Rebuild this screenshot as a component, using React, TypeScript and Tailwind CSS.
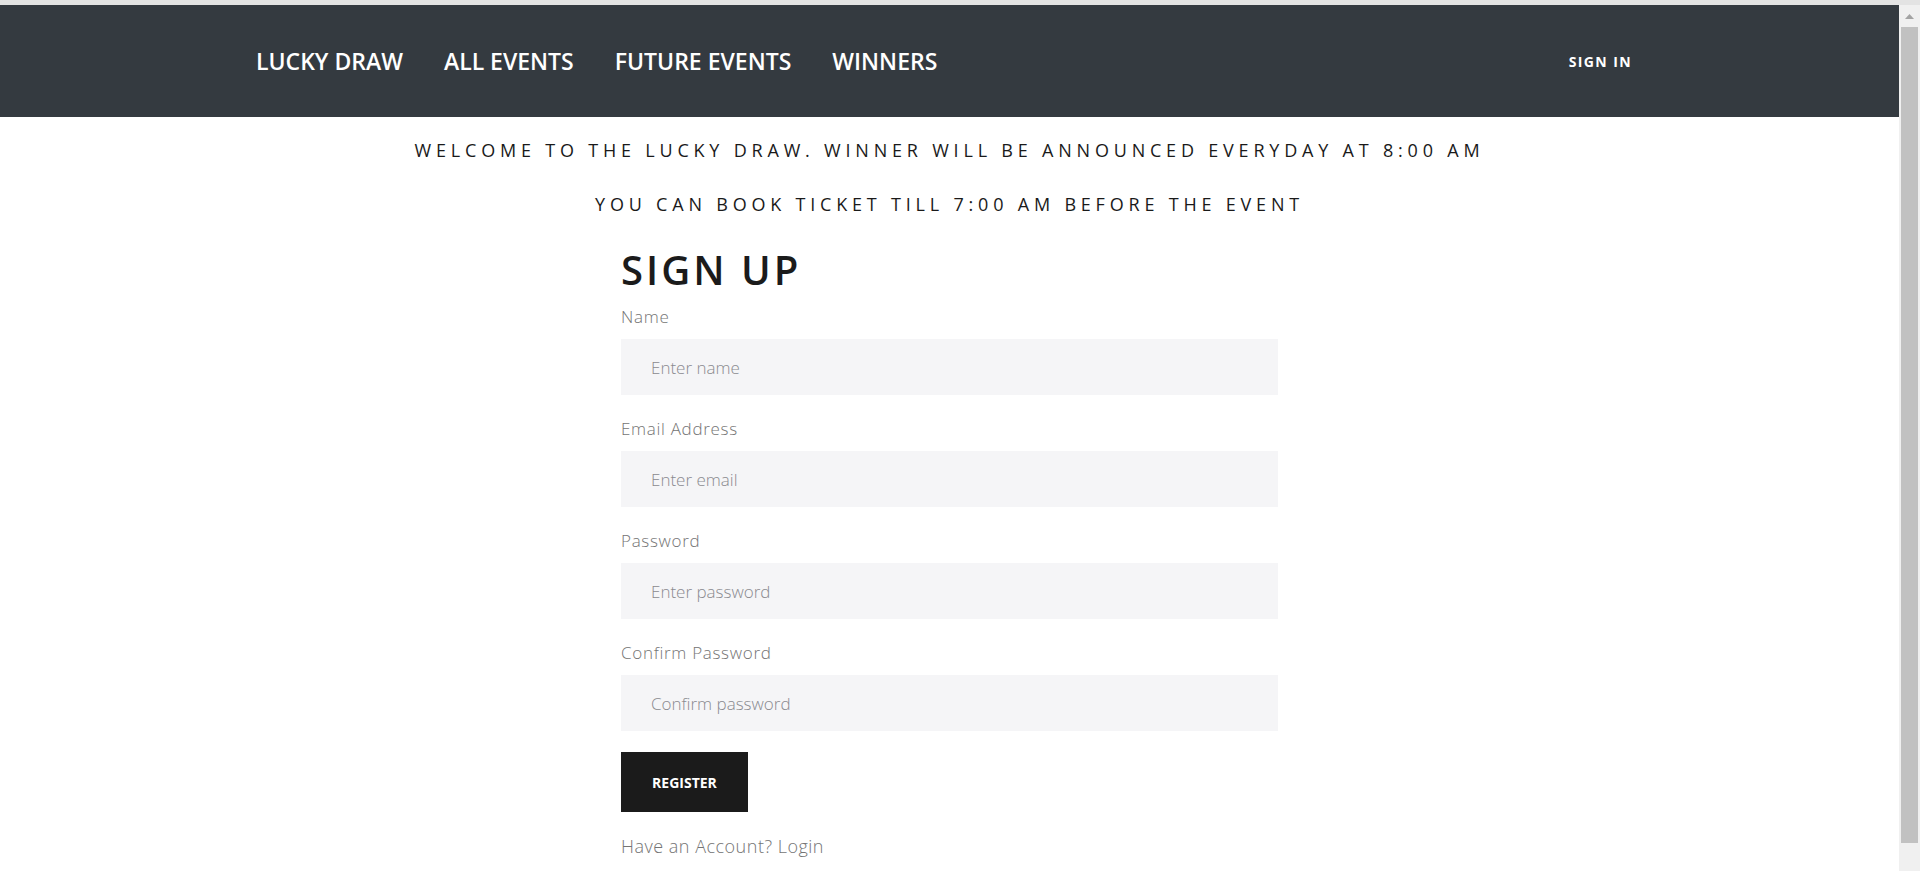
import { useState } from "react";

const fields = [
  { name: "name", label: "Name", type: "text", placeholder: "Enter name" },
  { name: "email", label: "Email Address", type: "email", placeholder: "Enter email" },
  { name: "password", label: "Password", type: "password", placeholder: "Enter password" },
  { name: "confirm", label: "Confirm Password", type: "password", placeholder: "Confirm password" },
];

export default function App() {
  const [formData, setFormData] = useState<Record<string, string>>({
    name: "",
    email: "",
    password: "",
    confirm: "",
  });

  const handleChange = (e: React.ChangeEvent<HTMLInputElement>) => {
    const { name, value } = e.target;
    setFormData((prev) => ({ ...prev, [name]: value }));
  };

  return (
    <div className="h-[871px] overflow-hidden bg-white font-['Open_Sans','Liberation_Sans',sans-serif]">
      {/* browser chrome strip */}
      <div className="h-[5px] bg-[#e3e3e3]" />

      <div className="flex h-[866px]">
        <div className="flex-1 min-w-0">
          {/* Navbar */}
          <nav className="flex h-[112px] items-center justify-between bg-[#343a40] pl-[256px] pr-[267px]">
            <ul className="flex items-center gap-[41px] text-[23px] font-semibold text-white">
              <li><a href="#">LUCKY DRAW</a></li>
              <li><a href="#">ALL EVENTS</a></li>
              <li><a href="#">FUTURE EVENTS</a></li>
              <li><a href="#">WINNERS</a></li>
            </ul>
            <a href="#" className="text-[14px] font-bold tracking-[0.1em] text-white">
              SIGN IN
            </a>
          </nav>

          {/* Announcements */}
          <p className="mt-[19px] text-center text-[18px] font-medium leading-[28px] tracking-[4.8px] text-[#1a1a1a]">
            WELCOME TO THE LUCKY DRAW. WINNER WILL BE ANNOUNCED EVERYDAY AT 8:00 AM
          </p>
          <p className="mt-[26px] text-center text-[18px] font-medium leading-[28px] tracking-[4.8px] text-[#1a1a1a]">
            YOU CAN BOOK TICKET TILL 7:00 AM BEFORE THE EVENT
          </p>

          {/* Sign up form */}
          <form className="mx-auto mt-[28px] w-[657px]" onSubmit={(e) => e.preventDefault()}>
            <h1 className="text-[40px] font-semibold leading-[48px] tracking-[3px] text-[#1b1b1b]">
              SIGN UP
            </h1>

            <div className="mt-[11px]">
              {fields.map((f) => (
                <div key={f.name} className="mb-[22px]">
                  <label htmlFor={f.name} className="block text-[17px] font-light leading-[24px] tracking-[0.7px] text-[#747474]">
                    {f.label}
                  </label>
                  <input
                    id={f.name}
                    name={f.name}
                    type={f.type}
                    value={formData[f.name]}
                    onChange={handleChange}
                    placeholder={f.placeholder}
                    className="mt-[10px] block h-[56px] w-full bg-[#f5f5f7] px-[30px] text-[17px] font-light text-[#333] placeholder:text-[#8a8a8f] focus:outline-none"
                  />
                </div>
              ))}
            </div>

            <button
              type="submit"
              className="-mt-[1px] h-[60px] w-[127px] bg-[#1b1b1b] text-[14px] font-bold text-white"
            >
              REGISTER
            </button>

            <p className="mt-[22px] text-[18px] font-light leading-[24px] tracking-[0.5px] text-[#747474]">
              Have an Account? <a href="#">Login</a>
            </p>
          </form>
        </div>

        {/* scrollbar */}
        <div className="flex w-[21px] flex-col bg-[#f0f0f0] pl-[2px] pr-[2px]">
          <div className="flex h-[22px] items-center justify-center">
            <svg width="9" height="5" viewBox="0 0 9 5">
              <path d="M0 5 L4.5 0 L9 5 Z" fill="#a3a3a3" />
            </svg>
          </div>
          <div className="h-[816px] bg-[#c1c1c1]" />
        </div>
      </div>
    </div>
  );
}
